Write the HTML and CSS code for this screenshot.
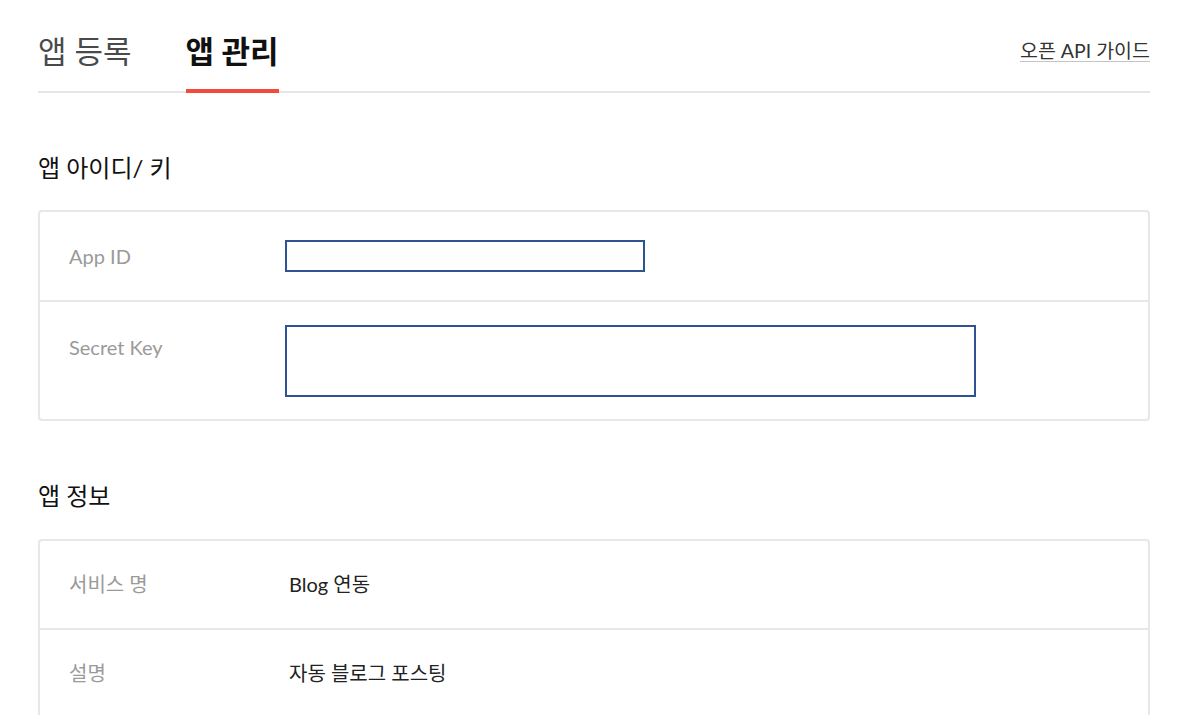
FILE: index.html
```html
<!DOCTYPE html>
<html lang="ko">
<head>
<meta charset="utf-8">
<title>앱 관리</title>
<link rel="stylesheet" href="styles.css">
</head>
<body>
<div class="page">
  <div class="tabs">
    <a class="tab">앱 등록</a>
    <a class="tab active">앱 관리</a>
    <a class="guide">오픈 API 가이드</a>
  </div>

  <h2 class="section-title first">앱 아이디/ 키</h2>
  <div class="box">
    <div class="row row-id">
      <div class="label">App ID</div>
      <div class="value"><div class="field field-id"></div></div>
    </div>
    <div class="row row-key">
      <div class="label label-key">Secret Key</div>
      <div class="value"><div class="field field-key"></div></div>
    </div>
  </div>

  <h2 class="section-title">앱 정보</h2>
  <div class="box">
    <div class="row row-info">
      <div class="label">서비스 명</div>
      <div class="value text">Blog 연동</div>
    </div>
    <div class="row row-info">
      <div class="label">설명</div>
      <div class="value text">자동 블로그 포스팅</div>
    </div>
  </div>
</div>
</body>
</html>
```

FILE: styles.css
```css
* { box-sizing: border-box; }
html, body { margin: 0; padding: 0; background: #fff; }
body {
  font-family: "Lato", "Noto Sans CJK KR", sans-serif;
  color: #222;
}
.page {
  width: 1112px;
  margin-left: 38px;
  padding-bottom: 40px;
}
.tabs {
  display: flex;
  align-items: flex-start;
  gap: 54px;
  border-bottom: 2px solid #e5e5e5;
  height: 93px;
}
.tab {
  display: block;
  margin-top: 31px;
  font-size: 31px;
  line-height: 40px;
  color: #4a4a4a;
  padding-bottom: 18px;
  border-bottom: 4px solid transparent;
}
.tab.active {
  color: #111;
  font-weight: 700;
  border-bottom-color: #f5493c;
}
.guide {
  margin-left: auto;
  margin-top: 39px;
  font-size: 19.5px;
  line-height: 24px;
  color: #333;
  text-decoration: underline;
  text-decoration-color: #c4c4c4;
  text-underline-offset: 3px;
}
.section-title {
  margin: 60px 0 28px;
  font-size: 24px;
  line-height: 30px;
  font-weight: 400;
  color: #111;
}
.section-title.first { margin-top: 60px; margin-bottom: 27px; }
.box {
  border: 2px solid #e7e7e7;
  border-radius: 4px;
}
.row {
  display: flex;
  align-items: flex-start;
  padding-left: 29px;
}
.row + .row { border-top: 2px solid #e7e7e7; }
.row-id { padding-top: 28px; padding-bottom: 28px; }
.row-key { padding-top: 23px; padding-bottom: 22px; }
.row-info { padding-top: 27px; padding-bottom: 28px; }
.label {
  width: 216px;
  flex: none;
  font-size: 20px;
  line-height: 32px;
  color: #9a9a9a;
}
.label-key { margin-top: 6px; }
.value.text {
  padding-left: 4px;
  font-size: 20px;
  line-height: 32px;
  color: #222;
}
.field {
  border: 2px solid #2f5293;
  background: #fff;
}
.field-id { width: 360px; height: 32px; }
.field-key { width: 691px; height: 72px; }
```
